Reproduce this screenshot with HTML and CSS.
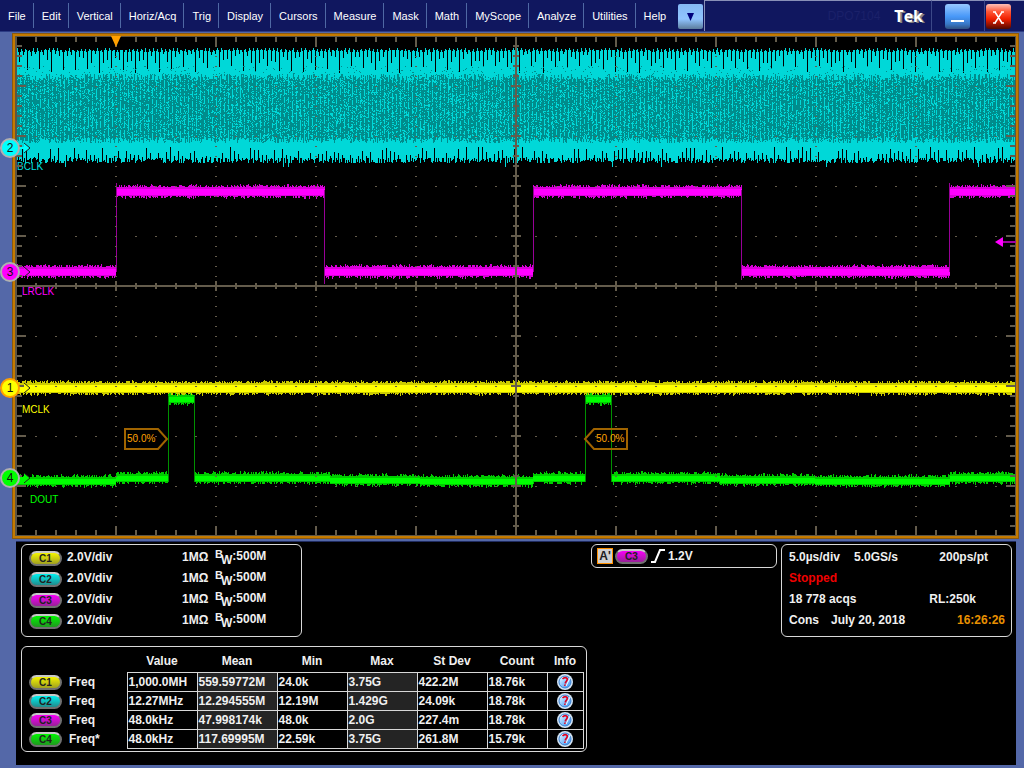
FILE: index.html
```html
<!DOCTYPE html>
<html lang="en">
<head>
    <meta charset="UTF-8">
    <meta name="viewport" content="width=device-width, initial-scale=1.0">
    <title>Tek Oscilloscope</title>
    <link rel="stylesheet" href="styles.css">
</head>
<body>

    <header class="menubar">
        <nav class="menu">
            <button>File</button>
            <button>Edit</button>
            <button>Vertical</button>
            <button>Horiz/Acq</button>
            <button>Trig</button>
            <button>Display</button>
            <button>Cursors</button>
            <button>Measure</button>
            <button>Mask</button>
            <button>Math</button>
            <button>MyScope</button>
            <button>Analyze</button>
            <button>Utilities</button>
            <button>Help</button>
        </nav>
        <button class="more" aria-label="More">
            <svg width="8" height="8" viewBox="0 0 8 8"><path d="M0 0h7L3.5 8z" fill="#00007c"/></svg>
        </button>
        <div class="brand">
            <span class="model">DPO7104</span>
            <span class="logo">Tek</span>
        </div>
        <div class="window-cell">
            <button class="window-btn minimize" aria-label="Minimize">
                <svg width="25" height="25" viewBox="0 0 25 25"><path d="M6 17h13" stroke="#fff" stroke-width="2"/></svg>
            </button>
        </div>
        <div class="window-cell last">
            <button class="window-btn close" aria-label="Close">
                <svg width="25" height="25" viewBox="0 0 25 25"><path d="M9 8l7 11M16 8L9 19M7 8h3M15 8h3M7 19h3M15 19h3" stroke="#fff" stroke-width="1.5" fill="none"/></svg>
            </button>
        </div>
    </header>

    <svg class="scope" viewBox="0 32 1024 509">
        <rect x="12" y="33" width="1007" height="506" fill="#8a5a10"/>
        <rect x="13" y="34" width="1005" height="504" fill="#c47a00"/>
        <rect x="15" y="36" width="1001" height="500" fill="#5c5444"/>
        <rect x="17" y="37" width="998" height="498" fill="#000"/>

        <text class="trace-label" x="17" y="170" fill="#00e0e0">BCLK</text>
        <g id="traces" shape-rendering="crispEdges"></g>
        <g id="grid" shape-rendering="crispEdges"></g>

        <!-- trigger position and trigger level -->
        <path d="M111 36h10l-5 11z" fill="#ffa000"/>
        <path d="M1002 242h14" stroke="#a000a0" stroke-width="2"/>
        <path d="M995 242l8-5v10z" fill="#f0f"/>

        <text class="trace-label" x="22" y="295" fill="#f0f">LRCLK</text>
        <text class="trace-label" x="22" y="413" fill="#ff0">MCLK</text>
        <text class="trace-label" x="30" y="503" fill="#0f0">DOUT</text>

        <g stroke="#a06400" stroke-width="2" fill="none">
            <path d="M125 429h33l9 10-9 10h-33z"/>
            <path d="M627 429h-33l-9 10 9 10h33z"/>
        </g>
        <text class="flag" x="127" y="442">50.0%</text>
        <text class="flag" x="596" y="442">50.0%</text>

        <g id="badges"></g>
    </svg>

    <main class="readouts">
        <div class="top-row">
            <section class="box channels">
                <div class="channel"><span class="pill c1">C1</span><span>2.0V/div</span><span class="imp">1MΩ</span><span class="bw"><i>B</i><b>W</b>:500M</span></div>
                <div class="channel"><span class="pill c2">C2</span><span>2.0V/div</span><span class="imp">1MΩ</span><span class="bw"><i>B</i><b>W</b>:500M</span></div>
                <div class="channel"><span class="pill c3">C3</span><span>2.0V/div</span><span class="imp">1MΩ</span><span class="bw"><i>B</i><b>W</b>:500M</span></div>
                <div class="channel"><span class="pill c4">C4</span><span>2.0V/div</span><span class="imp">1MΩ</span><span class="bw"><i>B</i><b>W</b>:500M</span></div>
            </section>

            <section class="box trigger">
                <span class="event">A'</span>
                <span class="pill c3">C3</span>
                <svg width="16" height="14" viewBox="0 0 16 14"><path d="M1 13h4L10 1h5" stroke="#fff" stroke-width="2" fill="none"/></svg>
                <span>1.2V</span>
            </section>

            <section class="box acquisition">
                <div class="line"><span class="rate">5.0µs/div</span><span>5.0GS/s</span><span class="right wide">200ps/pt</span></div>
                <div class="line stopped">Stopped</div>
                <div class="line"><span>18 778 acqs</span><span class="right length">RL:250k</span></div>
                <div class="line"><span class="cons">Cons</span><span>July 20, 2018</span><span class="right clock">16:26:26</span></div>
            </section>
        </div>

        <section class="box measurements">
            <table>
                <thead>
                    <tr>
                        <td class="source"></td>
                        <th class="medium">Value</th>
                        <th class="large">Mean</th>
                        <th class="medium">Min</th>
                        <th class="medium">Max</th>
                        <th class="medium">St Dev</th>
                        <th class="small">Count</th>
                        <th class="tiny">Info</th>
                    </tr>
                </thead>
                <tbody>
                    <tr>
                        <th><span class="pill c1">C1</span>Freq</th>
                        <td>1,000.0MH</td><td class="shade">559.59772M</td><td>24.0k</td><td class="shade">3.75G</td><td>422.2M</td><td>18.76k</td>
                        <td class="info"><button aria-label="Info"><svg width="16" height="16" viewBox="0 0 16 16"><use href="#info"/></svg></button></td>
                    </tr>
                    <tr>
                        <th><span class="pill c2">C2</span>Freq</th>
                        <td>12.27MHz</td><td class="shade">12.294555M</td><td>12.19M</td><td class="shade">1.429G</td><td>24.09k</td><td>18.78k</td>
                        <td class="info"><button aria-label="Info"><svg width="16" height="16" viewBox="0 0 16 16"><use href="#info"/></svg></button></td>
                    </tr>
                    <tr>
                        <th><span class="pill c3">C3</span>Freq</th>
                        <td>48.0kHz</td><td class="shade">47.998174k</td><td>48.0k</td><td class="shade">2.0G</td><td>227.4m</td><td>18.78k</td>
                        <td class="info"><button aria-label="Info"><svg width="16" height="16" viewBox="0 0 16 16"><use href="#info"/></svg></button></td>
                    </tr>
                    <tr>
                        <th><span class="pill c4">C4</span>Freq*</th>
                        <td>48.0kHz</td><td class="shade">117.69995M</td><td>22.59k</td><td class="shade">3.75G</td><td>261.8M</td><td>15.79k</td>
                        <td class="info"><button aria-label="Info"><svg width="16" height="16" viewBox="0 0 16 16"><use href="#info"/></svg></button></td>
                    </tr>
                </tbody>
            </table>
        </section>
    </main>

    <svg class="defs" width="0" height="0">
        <defs>
            <linearGradient id="infoFill" x1="0" y1="0" x2="1" y2="1">
                <stop offset="0" stop-color="#fff"/>
                <stop offset="0.400" stop-color="#9fd0ff"/>
                <stop offset="1" stop-color="#2f8cf0"/>
            </linearGradient>
            <g id="info">
                <circle cx="8" cy="8" r="8" fill="#d4e4f4"/>
                <circle cx="8" cy="8" r="6" fill="url(#infoFill)" stroke="#3a80d0"/>
                <path d="M5.500 5q2-2 4 -1t-1 4.500v1M8 10.500v1.500" stroke="#e00020" stroke-width="1.700" fill="none"/>
                <path d="M13 4L9 12" stroke="#fff"/>
            </g>
        </defs>
    </svg>

    <script src="scope.js"></script>
</body>
</html>
```
FILE: styles.css
```css
* {
    box-sizing: border-box;
}

body {
    margin: 0;
    min-height: 100vh;
    background-color: #5468a8;
    font-family: "Liberation Sans", Arial, sans-serif;
    font-size: 12px;
    color: #f0f0f0;
}

button {
    padding: 0;
    border: none;
    background: none;
    color: inherit;
    font: inherit;
    cursor: pointer;
}

/* menu bar */
.menubar {
    display: flex;
    align-items: stretch;
    height: 32px;
    background-color: #10175f;
    border-bottom: 1px solid #2c3c84;
}

.menu {
    display: flex;
    padding: 3px 0;
}

.menu button {
    padding: 0 7px 0 8px;
    border-right: 1px solid #4f68a4;
    font-size: 11px;
    color: #fff;
    white-space: nowrap;
}

.menu button:last-child {
    border-right: none;
}

.more {
    display: flex;
    align-items: center;
    justify-content: center;
    width: 25px;
    height: 25px;
    margin: 4px 0 0 5px;
    border-radius: 2px;
    background: linear-gradient(#84b8f4, #90c4ff 60%, #5c7c9c);
}

.brand {
    display: flex;
    flex: 1;
    align-items: center;
    justify-content: flex-end;
    gap: 14px;
    margin-left: 1px;
    padding-right: 8px;
    border-left: 1px solid #8890b8;
    border-top: 1px solid #8890b8;
}

.model {
    color: #1b216a;
}

.logo {
    font-family: "Open Sans", sans-serif;
    font-size: 16px;
    font-weight: bold;
    line-height: 20px;
    color: #fff;
    text-shadow: 2px 1px 0 #808080;
}

.window-cell {
    padding: 3px 14px 0 13px;
    border-left: 1px solid #3c4888;
    border-top: 1px solid #8890b8;
}

.window-cell.last {
    padding: 3px 13px 0 1px;
}

.window-btn {
    display: block;
    width: 25px;
    height: 25px;
    border-radius: 3px;
}

.window-btn svg {
    display: block;
}

.minimize {
    background: linear-gradient(#98c8ff, #4898f8 50%, #3878c8 80%, #305080);
}

.close {
    background: linear-gradient(#ffc0b8, #ff5838 30%, #f02000 60%, #500800);
}

/* graticule */
.scope {
    display: block;
    width: 100%;
}

.trace-label {
    font-size: 10px;
}

.flag {
    font-size: 10px;
    fill: #ffa000;
}

.badge {
    font-size: 12px;
    text-anchor: middle;
    fill: #101010;
}

/* readouts */
.readouts {
    margin: 0 8px 3px 16px;
    padding: 2px 4px 13px 5px;
    background-color: #000;
    border-top: 1px solid #202c60;
    font-weight: bold;
}

.top-row {
    display: flex;
    align-items: flex-start;
    gap: 4px;
    margin-bottom: 9px;
}

.box {
    border: 1px solid #d8d8d8;
    border-radius: 6px;
}

.pill {
    display: inline-block;
    width: 33px;
    height: 15px;
    border: 2px solid #707070;
    border-top-color: #c8c8c8;
    border-radius: 8px;
    font-size: 10px;
    line-height: 12px;
    text-align: center;
    color: #202020;
}

.c1 {
    background: linear-gradient(#f4f400, #a0a020);
}

.c2 {
    background: linear-gradient(#00f0f0, #208c8c);
}

.c3 {
    background: linear-gradient(#f800f8, #982098);
}

.c4 {
    background: linear-gradient(#00f800, #209820);
}

.channels {
    flex: 0 1 281px;
    height: 93px;
    padding: 1px 7px;
}

.channel {
    display: flex;
    align-items: center;
    height: 21px;
}

.channel .pill {
    margin: 3px 5px 0 0;
}

.imp {
    width: 33px;
    margin-left: auto;
}

.bw {
    width: 79px;
}

.bw i {
    font-size: 11px;
    font-style: normal;
    vertical-align: 2px;
}

.bw b {
    margin-left: -2px;
    vertical-align: -4px;
}

.bw i,
.bw b {
    line-height: 8px;
}

.trigger {
    display: flex;
    flex: 0 1 186px;
    align-items: center;
    gap: 2px;
    height: 24px;
    margin-left: auto;
    padding: 0 5px;
}

.event {
    width: 16px;
    height: 16px;
    border: 1px solid #ff9000;
    background-color: #d0d0d0;
    line-height: 14px;
    text-align: center;
    color: #202020;
}

.acquisition {
    flex: 0 1 231px;
    height: 93px;
    padding: 2px 6px 0 7px;
}

.line {
    display: flex;
    height: 21px;
    line-height: 21px;
    white-space: nowrap;
}

.rate {
    width: 65px;
}

.cons {
    width: 42px;
}

.right {
    margin-left: auto;
}

.wide {
    margin-right: 17px;
}

.length {
    margin-right: 29px;
}

.stopped {
    color: #f00000;
}

.clock {
    color: #e89000;
}

.measurements {
    width: 566px;
    max-width: 100%;
    height: 106px;
    padding-right: 3px;
}

table {
    width: 100%;
    table-layout: fixed;
    border-collapse: collapse;
}

thead tr {
    height: 25px;
}

thead th {
    padding: 4px 0 0;
    line-height: 18px;
}

.source {
    width: 105px;
}

.medium {
    width: 70px;
}

.large {
    width: 80px;
}

.small {
    width: 60px;
}

.tiny {
    width: 36px;
}

tbody tr {
    height: 19px;
}

tbody th {
    padding: 0 0 0 7px;
    text-align: left;
    line-height: 16px;
}

tbody th .pill {
    margin-right: 7px;
}

tbody td {
    padding: 0 1px;
    border: 1px solid #d8d8d8;
    line-height: 16px;
}

.shade {
    background-color: #242424;
}

.info button {
    display: block;
    width: 16px;
    height: 16px;
    margin: 0 auto;
}

.info svg {
    display: block;
}

.defs {
    display: block;
    position: absolute;
}
```
FILE: scope.js
```javascript
const NS = 'http://www.w3.org/2000/svg';
const traces = document.getElementById('traces');
const grid = document.getElementById('grid');
const badges = document.getElementById('badges');

// small seeded generator so that the noise is the same on each load
let seed = 7104;
function rnd() {
    seed = (seed * 16807) % 2147483647;
    return seed / 2147483647;
}

function rand(n) {
    return Math.floor(rnd() * n);
}

function add(parent, name, attrs, text) {
    const el = document.createElementNS(NS, name);
    for (const key in attrs) el.setAttribute(key, attrs[key]);
    if (text) el.textContent = text;
    parent.appendChild(el);
}

function box(x, y, w, h) {
    return `M${x} ${y}h${w}v${h}h${-w}z`;
}

// fast clock on channel 2
function drawClock() {
    let dark = '';
    let bright = '';
    let specks = '';
    for (let x = 17; x < 1015; x++) {
        const phase = x % 4;
        let top = phase === 1 ? 48 + rand(3) : 50 + rand(3);
        let bottom = 158 + rand(6);
        if (phase === 3) top = x % 3 === 0 ? 66 + rand(8) : 54 + rand(10);
        if (phase === 2 && rnd() < 0.7) bottom = 147 + rand(12);
        if (rnd() < 0.008) bottom = 167;
        const upper = 74 + rand(7);
        const lower = 138 + rand(6);
        bright += box(x, top, 1, upper - top);
        dark += box(x, upper, 1, lower - upper);
        bright += box(x, lower, 1, bottom - lower);
        const chance = phase === 0 ? 0.7 : 0.13;
        for (let y = upper; y < lower; y += 1) {
            if (rnd() < chance) bright += box(x, y, 1, 1);
        }
        if (rnd() < 0.3) specks += box(x, 66 + rand(10), 1, 1);
    }
    add(traces, 'path', { d: dark, fill: '#008c8c' });
    add(traces, 'path', { d: bright, fill: '#00d8d8' });
    add(traces, 'path', { d: specks, fill: '#008c8c' });
}

// noisy horizontal stretch: solid core and a ragged dimmer edge
function drawLevel(x1, x2, y, h, color, dim) {
    let core = '';
    let edge = '';
    for (let x = x1; x < x2; x++) {
        const up = rnd() < 0.05 ? 3 : rnd() < 0.6 ? 1 + rand(2) : 0;
        const down = rnd() < 0.05 ? 3 : rnd() < 0.5 ? 1 + rand(2) : 0;
        edge += box(x, y - up, 1, h + up + down);
        core += box(x, y + 2, 1, h - 3);
    }
    add(traces, 'path', { d: edge, fill: dim });
    add(traces, 'path', { d: core, fill: color });
}

function drawEdge(x, y1, y2, color) {
    add(traces, 'rect', { x: x, y: y1, width: 1, height: y2 - y1, fill: color });
}

drawClock();

[[17, 116, 267], [116, 325, 187], [325, 533, 267], [533, 742, 187], [742, 950, 267], [950, 1015, 187]].forEach(function (s) {
    drawLevel(s[0], s[1], s[2], 9, '#ff00ff', '#d800d8');
});
[[116, 183, 272], [324, 190, 284], [533, 187, 272], [741, 190, 280], [949, 183, 272]].forEach(function (e) {
    drawEdge(e[0], e[1], e[2], '#980098');
});

[[17, 116, 477], [116, 168, 474], [168, 195, 395], [195, 330, 474], [330, 420, 476], [420, 533, 477], [533, 585, 474], [585, 612, 395], [612, 720, 474], [720, 815, 476], [815, 950, 477], [950, 1015, 474]].forEach(function (s) {
    drawLevel(s[0], s[1], s[2], 8, '#00ff00', '#00cc00');
});
[168, 194, 585, 611].forEach(function (x) {
    drawEdge(x, 396, 482, '#009000');
});

drawLevel(17, 1015, 383, 10, '#ffff00', '#cccc00');

// graticule: ticks on the frame and the two axes, dots on the division lines
let lines = box(17, 285, 998, 2) + box(515, 37, 2, 498);
for (let x = 36; x < 1015; x += 20) {
    const major = (x - 16) % 100 === 0;
    const len = major ? 9 : 5;
    lines += box(x - 1, 37, 2, len) + box(x - 1, 535 - len, 2, len);
    lines += box(x - 1, 286 - (major ? 5 : 3), 2, major ? 10 : 6);
    for (let y = 86; y < 536; y += 50) {
        if (y !== 286) lines += box(x - 1, y, 2, 1);
    }
}
for (let y = 46; y < 535; y += 10) {
    const major = (y - 36) % 50 === 0;
    const len = major ? 9 : 5;
    lines += box(17, y - 1, len, 2) + box(1015 - len, y - 1, len, 2);
    lines += box(516 - (major ? 5 : 3), y - 1, major ? 10 : 6, 2);
    for (let x = 116; x < 1015; x += 100) {
        if (x !== 516) lines += box(x - 1, y, 2, 1);
    }
}
add(grid, 'path', { d: lines, fill: '#645c4c' });

// channel reference markers on the left edge
[[2, 148, '#00ffff', '#b0b0b0'], [3, 272, '#ff00ff', '#b0b0b0'], [1, 388, '#ffff00', '#ffa000'], [4, 478, '#00ff00', '#b0b0b0']].forEach(function (b) {
    const y = b[1];
    add(badges, 'path', { d: `M17 ${y - 1}h7v-4l6 5-6 5v-4h-7z`, fill: b[2] });
    add(badges, 'path', { d: `M24 ${y - 5}l6 5-6 5`, fill: 'none', stroke: '#202020' });
    add(badges, 'circle', { cx: 10, cy: y, r: 9, fill: b[2], stroke: b[3], 'stroke-width': 2 });
    add(badges, 'text', { x: 10, y: y + 4, class: 'badge' }, String(b[0]));
});
```
